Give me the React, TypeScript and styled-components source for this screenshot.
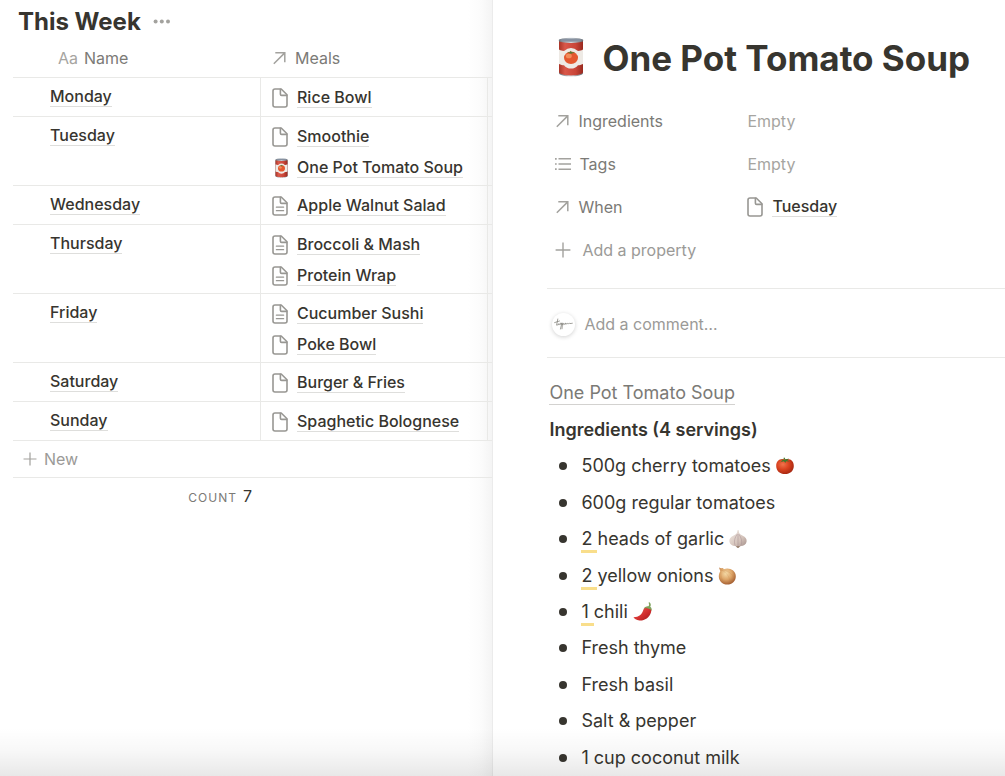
import React from "react";
import styled, { createGlobalStyle } from "styled-components";

const Global = createGlobalStyle`
  * { box-sizing: border-box; }
  body {
    margin: 0;
    background: #fff;
    color: #37352f;
    font-family: Inter, "Liberation Sans", sans-serif;
    font-size: 16px;
    -webkit-font-smoothing: antialiased;
  }
  button { font: inherit; border: 0; background: none; padding: 0; cursor: pointer; }
  svg { display: block; flex: none; }
`;

const Page = styled.div`
  position: relative;
  display: grid;
  grid-template-columns: minmax(0, 49fr) minmax(0, 51fr);
  height: 100vh;
  overflow: hidden;
`;

const BottomFade = styled.div`
  position: absolute;
  left: 0;
  right: 0;
  bottom: 0;
  height: 48px;
  pointer-events: none;
  background: linear-gradient(to bottom, rgba(0, 0, 0, 0), rgba(0, 0, 0, 0.03) 50%, rgba(0, 0, 0, 0.09));
`;

const WeekPane = styled.section`
  padding: 8px 0 0 13px;
  background: linear-gradient(to left, #f4f4f4, #fbfbfb 10px, #fff 24px);
`;

const WeekHeader = styled.header`
  display: flex;
  align-items: center;
  gap: 12px;
  height: 28px;
  padding-left: 5px;
`;

const WeekTitle = styled.h2`
  margin: 0;
  font-size: 24px;
  line-height: 28px;
  font-weight: 700;
`;

const WeekTable = styled.table`
  width: 100%;
  table-layout: fixed;
  border-collapse: separate;
  border-spacing: 0;
`;

const NameCol = styled.col`
  width: 248px;
`;

const EdgeCol = styled.col`
  width: 4px;
`;

const HeadCell = styled.th<{ $indent: number }>`
  height: 42px;
  padding: 3px 0 0 ${(p) => p.$indent}px;
  border-bottom: 1px solid #e9e9e7;
  text-align: left;
  font-size: 16px;
  font-weight: 400;
  color: #7b7a76;
`;

const HeadLabel = styled.span<{ $gap: number }>`
  display: flex;
  align-items: center;
  gap: ${(p) => p.$gap}px;
`;

const Muted = styled.span`
  color: #a6a5a1;
`;

const Row = styled.tr`
  height: 39px;
`;

const BodyCell = styled.td<{ $indent: number }>`
  padding: 8px 0 6px ${(p) => p.$indent}px;
  vertical-align: top;
  border-bottom: 1px solid #e9e9e7;
  border-right: 1px solid #e9e9e7;
`;

const EdgeCell = styled.td`
  padding: 0;
  border-bottom: 1px solid #e9e9e7;
`;

const MealList = styled.div`
  display: flex;
  flex-direction: column;
  gap: 8px;
`;

const MealRow = styled.div`
  display: flex;
  align-items: center;
  gap: 9px;
  height: 23px;
`;

const PageLink = styled.a`
  display: inline-block;
  border-bottom: 1px solid #dededc;
  color: #37352f;
  font-size: 16px;
  line-height: 19px;
  font-weight: 500;
  text-decoration: none;
  white-space: nowrap;
`;

const NewRow = styled.button`
  display: flex;
  align-items: center;
  gap: 7px;
  width: 100%;
  height: 37px;
  padding-left: 10px;
  border-bottom: 1px solid #e9e9e7;
  color: #9b9a97;
`;

const CountRow = styled.div`
  display: flex;
  align-items: baseline;
  justify-content: flex-end;
  gap: 6px;
  width: 239px;
  padding-top: 8px;
  line-height: 20px;
`;

const CountLabel = styled.span`
  font-size: 12px;
  letter-spacing: 1px;
  color: #7b7a76;
`;

const DetailPane = styled.main`
  padding: 32px 0 0 54px;
  background: #fff;
  border-left: 1px solid #ebebeb;
`;

const TitleRow = styled.div`
  display: flex;
  align-items: center;
  gap: 18px;
  height: 52px;
  padding-left: 11px;
`;

const TitleIcon = styled.span`
  padding-bottom: 3px;
`;

const Title = styled.h1`
  margin: 0;
  font-size: 35px;
  line-height: 52px;
  font-weight: 700;
  white-space: nowrap;
`;

const Properties = styled.div`
  display: flex;
  flex-direction: column;
  padding: 15px 0 17px 8px;
`;

const Property = styled.div`
  display: grid;
  grid-template-columns: 192px 1fr;
  align-items: center;
  height: 43px;
`;

const PropertyName = styled.span`
  display: flex;
  align-items: center;
  gap: 7px;
  color: #7b7a76;
`;

const PropertyValue = styled.span`
  display: flex;
  align-items: center;
  gap: 9px;
  color: #a6a5a1;
`;

const AddProperty = styled.button`
  display: flex;
  align-items: center;
  gap: 11px;
  height: 43px;
  color: #9b9a97;
`;

const CommentRow = styled.label`
  display: flex;
  align-items: center;
  gap: 9px;
  height: 70px;
  padding: 2px 0 0 5px;
  border-top: 1px solid #e9e9e7;
  border-bottom: 1px solid #e9e9e7;
`;

const Avatar = styled.span`
  display: flex;
  align-items: center;
  justify-content: center;
  width: 23px;
  height: 23px;
  border-radius: 50%;
  background: #fff;
  box-shadow: 0 1px 4px rgba(0, 0, 0, 0.18);
`;

const CommentInput = styled.input`
  flex: 1;
  min-width: 0;
  padding: 0;
  border: 0;
  outline: 0;
  background: none;
  font: inherit;
  color: #37352f;
  &::placeholder { color: #9b9a97; opacity: 1; }
`;

const Body = styled.article`
  padding: 17px 0 0 2px;
  font-size: 18px;
  line-height: 36px;
`;

const SourceLink = styled.a`
  display: inline-block;
  border-bottom: 1px solid #d3d2d0;
  color: #7b7a76;
  line-height: 22px;
  text-decoration: none;
`;

const SourceLine = styled.div`
  display: flex;
  align-items: center;
  height: 37px;
`;

const Subheading = styled.h3`
  margin: 0;
  font-size: 18px;
  line-height: 36px;
  font-weight: 600;
`;

const IngredientList = styled.ul`
  display: grid;
  min-height: 328px;
  margin: 0;
  padding: 0 0 0 10px;
  list-style: none;
`;

const Ingredient = styled.li`
  display: flex;
  align-items: center;
  gap: 5px;
  &::before {
    content: "";
    width: 8px;
    height: 8px;
    margin-right: 9px;
    border-radius: 50%;
    background: #37352f;
  }
`;

const IngredientText = styled.span`
  line-height: 24px;
  white-space: pre;
`;

const Marked = styled.span`
  padding-bottom: 1px;
  border-bottom: 3px solid #f9de8b;
`;

const CanSlot = styled.span`
  display: flex;
  justify-content: center;
  width: 16px;
  padding-left: 2px;
`;

const stroke = { fill: "none", stroke: "#a3a29e", strokeLinecap: "round", strokeLinejoin: "round" } as const;

const ArrowIcon = () => (
  <svg width="16" height="16" viewBox="0 0 16 16" {...stroke} strokeWidth="1.5" strokeLinecap="butt" strokeLinejoin="miter">
    <path d="M1.800 13.800 12.500 3.100M3.300 2.700h9.500v9.500" />
  </svg>
);

const ListIcon = () => (
  <svg width="17" height="16" viewBox="0 0 17 16" {...stroke} strokeWidth="1.4" strokeLinecap="butt">
    <path d="M3.500 2.800h12.500M3.500 8h12.500M3.500 13.200h12.500" />
    <path d="M0 2.800h1.700M0 8h1.700M0 13.200h1.700" strokeWidth="1.700" />
  </svg>
);

const PlusIcon = ({ size }: { size: number }) => (
  <svg width={size} height={size} viewBox="0 0 16 16" {...stroke} strokeWidth="1.4" strokeLinecap="butt">
    <path d="M8 .6v14.800M.6 8h14.800" />
  </svg>
);

const DotsIcon = () => (
  <svg width="18" height="6" viewBox="0 0 18 6" fill="#a3a29e">
    <circle cx="2.600" cy="2.500" r="2" />
    <circle cx="8.800" cy="2.500" r="2" />
    <circle cx="15" cy="2.500" r="2" />
  </svg>
);

const DocIcon = ({ filled }: { filled?: boolean }) => (
  <svg width="16" height="20" viewBox="0 0 16 20" {...stroke} stroke="#989793" strokeWidth="1.600">
    <path d="M3 1h6.200L15 6.800V17a2 2 0 0 1-2 2H3a2 2 0 0 1-2-2V3a2 2 0 0 1 2-2Z" />
    <path d="M8.400 1.300v4.900a1.200 1.200 0 0 0 1.200 1.200h5.100" />
    {filled && <path d="M4.400 11.200h7.200M4.400 14.700h7.200" strokeWidth="1.300" />}
  </svg>
);

const CanIcon = ({ width, height }: { width: number; height: number }) => (
  <svg width={width} height={height} viewBox="0 0 26 40">
    <defs>
      <linearGradient id="can" x1="0" x2="1" y1="0" y2="0">
        <stop offset="0" stopColor="#a93427" />
        <stop offset=".25" stopColor="#d9584a" />
        <stop offset=".7" stopColor="#c94538" />
        <stop offset="1" stopColor="#98291f" />
      </linearGradient>
      <linearGradient id="rim" x1="0" x2="1" y1="0" y2="0">
        <stop offset="0" stopColor="#697078" />
        <stop offset=".5" stopColor="#d5dbe0" />
        <stop offset="1" stopColor="#646b73" />
      </linearGradient>
    </defs>
    <path d="M1 4v32c0 4.500 24 4.500 24 0V4Z" fill="url(#rim)" />
    <path d="M1 4.500v30.500c0 4.500 24 4.500 24 0V4.500Z" fill="url(#can)" />
    <path d="M1 12.500c2.500 1.300 4 1.600 5.500 1.300a9 9 0 0 1 13 0c1.500.3 3 0 5.500-1.300v14.500c-2 1-3.500 1.200-5 1.200a9 9 0 0 1-14 0c-1.500 0-3-.2-5-1.200Z" fill="#eeeae5" />
    <ellipse cx="13" cy="3.300" rx="12.300" ry="2.600" fill="url(#rim)" />
    <ellipse cx="13" cy="3.100" rx="10.800" ry="1.600" fill="#8791a0" />
    <ellipse cx="13" cy="20.800" rx="7" ry="6.200" fill="#e4582f" />
    <ellipse cx="10.800" cy="19" rx="3" ry="2.300" fill="#f28d5b" />
    <path d="m13 16.700-4-1.200 3-.3.500-1.500 1.300 1.500 3.500.3Z" fill="#4c7a32" />
  </svg>
);

const TomatoIcon = () => (
  <svg width="18" height="18" viewBox="0 0 18 18">
    <defs>
      <radialGradient id="tomato" cx=".38" cy=".35" r=".7">
        <stop offset="0" stopColor="#f1734c" />
        <stop offset=".5" stopColor="#d9421f" />
        <stop offset="1" stopColor="#a32611" />
      </radialGradient>
    </defs>
    <path d="M9 2.500c5-1.500 8.800 1.500 8.800 6.400 0 4.900-3.800 8.100-8.800 8.100S.2 13.800.2 8.900C.2 4 4 1 9 2.500Z" fill="url(#tomato)" />
    <path d="M8.700 3 7.300.9l1.200-.4 1 2 3.500-.9-1.800 1.700 2.600 1.200-3.800-.2-.6 1.800-1.500-1.800-3.700 1 2.300-1.700-2.400-1.200Z" fill="#3f7a2c" />
  </svg>
);

const GarlicIcon = () => (
  <svg width="18" height="18" viewBox="0 0 18 18">
    <defs>
      <linearGradient id="garlic" x1="0" x2="1" y1="0" y2="1">
        <stop offset="0" stopColor="#f3ebe5" />
        <stop offset=".6" stopColor="#d3c2b9" />
        <stop offset="1" stopColor="#a18c87" />
      </linearGradient>
    </defs>
    <path d="M8.500.3h1.200c.1 3 .8 4 3.600 5.300 3.500 1.600 4.600 3.700 4.300 6-.4 3-2.800 4.400-5.600 4.400L9 17.400 6 16C3.200 16 .8 14.600.4 11.600c-.3-2.300.8-4.400 4.300-6C7.500 4.300 8.300 3.300 8.500.3Z" fill="url(#garlic)" />
    <path d="M8.600 4C5.800 7 4.500 12 6.300 15.700M9.500 4c2.800 3 4.100 8 2.300 11.700M9 5v11" fill="none" stroke="#a68f93" strokeWidth=".5" />
    <path d="M7 16.200h4L9.800 17.700H8.200Z" fill="#8d7460" />
  </svg>
);

const OnionIcon = () => (
  <svg width="18" height="18" viewBox="0 0 18 18">
    <defs>
      <radialGradient id="onion" cx=".42" cy=".35" r=".7">
        <stop offset="0" stopColor="#f6dca9" />
        <stop offset=".5" stopColor="#dda568" />
        <stop offset="1" stopColor="#9c5429" />
      </radialGradient>
    </defs>
    <path d="M1 .6 3 1.200 5 .9l.8 1.300C11 0 17.800 3.200 17.800 9.200c0 4.900-3.700 8.400-8.500 8.400S.8 14 .8 9.200C.8 7 1.600 5.500 2.300 4.300Z" fill="url(#onion)" />
    <path d="M3 3C7 4 12 9 12.500 17M3 3c-1 5 1 11 4.500 14M3 3c6-.5 12 4 13.500 9.500" fill="none" stroke="#b97a42" strokeWidth=".3" opacity=".6" />
  </svg>
);

const ChiliIcon = () => (
  <svg width="19" height="19" viewBox="0 0 19 19">
    <defs>
      <linearGradient id="chili" x1="0" x2="1" y1="0" y2="1">
        <stop offset="0" stopColor="#f0645a" />
        <stop offset=".6" stopColor="#d02c2c" />
        <stop offset="1" stopColor="#9c1a1c" />
      </linearGradient>
    </defs>
    <path d="M.5 15.300c5.500-.3 8.500-2.800 9.800-7.300.8-2.300 2.700-3.500 4.700-3.200 2.800.4 3.900 2.600 3.100 5.200C16.500 16 11 18.900 6.500 18.500 3.500 18.200 1 16.800.5 15.300Z" fill="url(#chili)" />
    <path d="M10.800 6.800c1.100-1.900 3.100-2.600 4.700-2.500C16.500 3 16.200 1.800 15.400.8l1.300-.5c1.300 1.500 1.400 3 .5 4.500 1.400.8 1.800 2.300 1.300 4.200-.8-1.800-1.800-2.400-3-2.300-1.300-.8-2.900-.8-4.700.1Z" fill="#7da35c" />
  </svg>
);

const Signature = () => (
  <svg width="20" height="12" viewBox="0 0 20 12" fill="none" stroke="#77756f" strokeWidth=".7" strokeLinecap="round">
    <path d="M.6 4.600 5.500 3M3.800 1 2.600 7.200c.8.3 1.500-.6 2-1.500-.2 1.500.5 1.700 1.400.2M6.300 5.200c-.5 1.800.6 1.500 1.600-.4L6.500 11M8.500 5.500 8 10.800M8.400 6.500c1.200-1.800 1.900-1.200 1.300.2 1-.2 1.400-1.500 2.100-1.600-.5 1.600.3 1.600 1.100.3.400-.6.700.7 1.200.5.800-.5 1-1 1.600-.4.900.3 2-.3 2.600-.3" />
  </svg>
);

type Meal = { name: string; icon?: "text" | "can" };

const week: { day: string; meals: Meal[] }[] = [
  { day: "Monday", meals: [{ name: "Rice Bowl" }] },
  { day: "Tuesday", meals: [{ name: "Smoothie" }, { name: "One Pot Tomato Soup", icon: "can" }] },
  { day: "Wednesday", meals: [{ name: "Apple Walnut Salad", icon: "text" }] },
  { day: "Thursday", meals: [{ name: "Broccoli & Mash", icon: "text" }, { name: "Protein Wrap", icon: "text" }] },
  { day: "Friday", meals: [{ name: "Cucumber Sushi", icon: "text" }, { name: "Poke Bowl" }] },
  { day: "Saturday", meals: [{ name: "Burger & Fries" }] },
  { day: "Sunday", meals: [{ name: "Spaghetic Bolognese" }] },
];

const ingredients: { mark?: string; text: string; icon?: React.ReactNode }[] = [
  { text: "500g cherry tomatoes", icon: <TomatoIcon /> },
  { text: "600g regular tomatoes" },
  { mark: "2 ", text: "heads of garlic", icon: <GarlicIcon /> },
  { mark: "2 ", text: "yellow onions", icon: <OnionIcon /> },
  { mark: "1 ", text: "chili", icon: <ChiliIcon /> },
  { text: "Fresh thyme" },
  { text: "Fresh basil" },
  { text: "Salt & pepper" },
  { text: "1 cup coconut milk" },
];

const MealItem = ({ meal }: { meal: Meal }) => (
  <MealRow>
    {meal.icon === "can" ? (
      <CanSlot><CanIcon width={13} height={20} /></CanSlot>
    ) : (
      <DocIcon filled={meal.icon === "text"} />
    )}
    <PageLink href="#">{meal.name}</PageLink>
  </MealRow>
);

export default function App() {
  return (
    <>
      <Global />
      <Page>
        <WeekPane>
          <WeekHeader>
            <WeekTitle>This Week</WeekTitle>
            <button aria-label="More options"><DotsIcon /></button>
          </WeekHeader>
          <WeekTable>
            <colgroup>
              <NameCol />
              <col />
              <EdgeCol />
            </colgroup>
            <thead>
              <tr>
                <HeadCell $indent={45}><HeadLabel $gap={6}><Muted>Aa</Muted>Name</HeadLabel></HeadCell>
                <HeadCell $indent={11}><HeadLabel $gap={7}><ArrowIcon />Meals</HeadLabel></HeadCell>
                <HeadCell $indent={0} />
              </tr>
            </thead>
            <tbody>
              {week.map(({ day, meals }) => (
                <Row key={day}>
                  <BodyCell $indent={37}><PageLink href="#">{day}</PageLink></BodyCell>
                  <BodyCell $indent={11}>
                    <MealList>{meals.map((m) => <MealItem key={m.name} meal={m} />)}</MealList>
                  </BodyCell>
                  <EdgeCell />
                </Row>
              ))}
            </tbody>
          </WeekTable>
          <NewRow><PlusIcon size={14} />New</NewRow>
          <CountRow><CountLabel>COUNT</CountLabel>7</CountRow>
        </WeekPane>
        <DetailPane>
          <TitleRow>
            <TitleIcon><CanIcon width={26} height={40} /></TitleIcon>
            <Title>One Pot Tomato Soup</Title>
          </TitleRow>
          <Properties>
            <Property>
              <PropertyName><ArrowIcon />Ingredients</PropertyName>
              <PropertyValue>Empty</PropertyValue>
            </Property>
            <Property>
              <PropertyName><ListIcon />Tags</PropertyName>
              <PropertyValue>Empty</PropertyValue>
            </Property>
            <Property>
              <PropertyName><ArrowIcon />When</PropertyName>
              <PropertyValue><DocIcon /><PageLink href="#">Tuesday</PageLink></PropertyValue>
            </Property>
            <AddProperty><PlusIcon size={16} />Add a property</AddProperty>
          </Properties>
          <CommentRow>
            <Avatar><Signature /></Avatar>
            <CommentInput aria-label="Comment" placeholder="Add a comment…" />
          </CommentRow>
          <Body>
            <SourceLine><SourceLink href="#">One Pot Tomato Soup</SourceLink></SourceLine>
            <Subheading>Ingredients (4 servings)</Subheading>
            <IngredientList>
              {ingredients.map(({ mark, text, icon }) => (
                <Ingredient key={text}>
                  <IngredientText>{mark && <Marked>{mark}</Marked>}{text}</IngredientText>
                  {icon}
                </Ingredient>
              ))}
            </IngredientList>
          </Body>
        </DetailPane>
        <BottomFade />
      </Page>
    </>
  );
}
